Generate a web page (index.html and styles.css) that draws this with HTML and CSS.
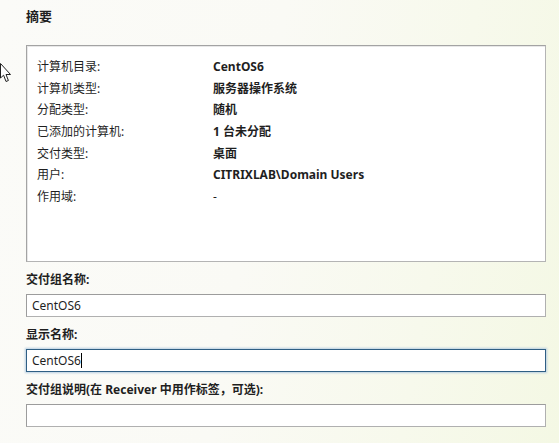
FILE: index.html
```html
<!DOCTYPE html>
<html lang="zh-CN">
<head>
<meta charset="utf-8">
<title>摘要</title>
<link rel="stylesheet" href="styles.css">
</head>
<body>
<div class="page">
  <svg class="pointer" width="12" height="22" viewBox="0 0 12 22">
    <path d="M0.5 0.5 L0.5 15 L3.6 12.2 L6 18.5 L8.4 17.5 L6 11.5 L10.5 11.5 Z" fill="#fff" stroke="#222" stroke-width="1"/>
  </svg>
  <h1 class="title">摘要</h1>
  <div class="summary">
    <div class="row"><span class="key">计算机目录:</span><span class="val">CentOS6</span></div>
    <div class="row"><span class="key">计算机类型:</span><span class="val">服务器操作系统</span></div>
    <div class="row"><span class="key">分配类型:</span><span class="val">随机</span></div>
    <div class="row"><span class="key">已添加的计算机:</span><span class="val">1 台未分配</span></div>
    <div class="row"><span class="key">交付类型:</span><span class="val">桌面</span></div>
    <div class="row"><span class="key">用户:</span><span class="val">CITRIXLAB\Domain Users</span></div>
    <div class="row"><span class="key">作用域:</span><span class="val plain">-</span></div>
  </div>
  <label class="label">交付组名称:</label>
  <div class="field">CentOS6</div>
  <label class="label">显示名称:</label>
  <div class="field focus">CentOS6<span class="caret"></span></div>
  <label class="label">交付组说明(在 Receiver 中用作标签，可选):</label>
  <div class="field"></div>
</div>
</body>
</html>
```
FILE: styles.css
```css
html, body {
  margin: 0;
  padding: 0;
  height: 100%;
}
body {
  background: linear-gradient(100deg, #fbfbf8 0%, #fafaf5 45%, #f7f9ec 75%, #f4f8e4 100%);
  font-family: "Noto Sans", "Noto Sans CJK SC", sans-serif;
  font-size: 12px;
  color: #1f1f1f;
  overflow: hidden;
}
.page {
  position: relative;
  padding: 6px 0 0 26px;
  width: 520px;
}
.pointer {
  position: absolute;
  left: 0;
  top: 63px;
}
.title {
  margin: 0;
  font-size: 13px;
  font-weight: bold;
  line-height: 20px;
  height: 39px;
}
.summary {
  box-sizing: border-box;
  height: 217px;
  background: #fff;
  border: 1px solid #a3a3a3;
  border-right-color: #b4b4b4;
  border-bottom-color: #b4b4b4;
  box-shadow: inset 1px 1px 0 #e8e8e8;
  padding: 10px 0 0 10px;
}
.row {
  display: flex;
  height: 21.7px;
  line-height: 21.7px;
}
.key {
  width: 176px;
}
.val {
  font-weight: bold;
}
.val.plain {
  font-weight: normal;
}
.label {
  display: block;
  font-weight: bold;
  line-height: 16px;
  margin: 10px 0 6px;
}
.field {
  box-sizing: border-box;
  height: 23px;
  line-height: 21px;
  background: #fff;
  border: 1px solid #9c9c9c;
  border-right-color: #b0b0b0;
  border-bottom-color: #b0b0b0;
  padding: 0 0 0 5px;
  font-size: 12px;
  display: flex;
  align-items: center;
}
.field.focus {
  border: 1px solid #2f5f84;
  box-shadow: 0 0 2px 1px #b7cde0;
}
.caret {
  display: inline-block;
  width: 1px;
  height: 15px;
  background: #000;
}
```
